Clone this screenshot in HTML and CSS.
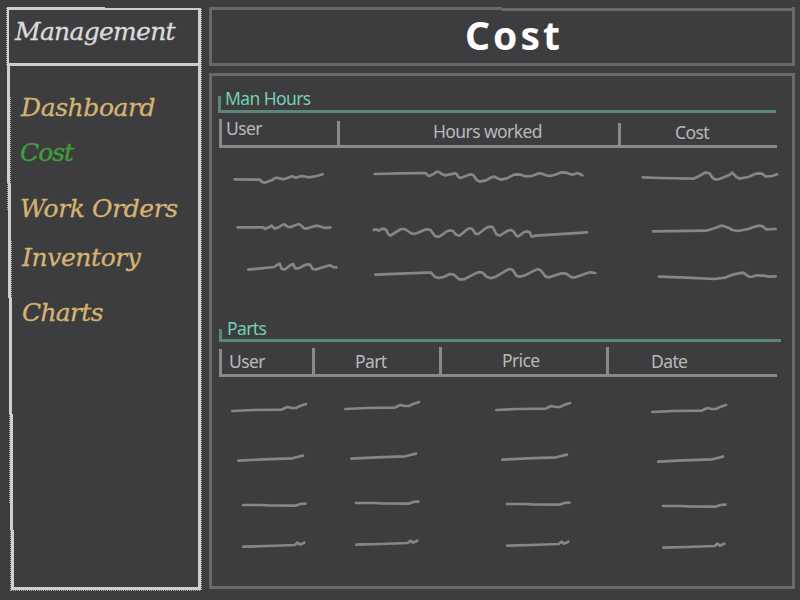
FILE: index.html
```
<!DOCTYPE html>
<html lang="en">
<head>
<meta charset="utf-8">
<title>Cost</title>
<link rel="stylesheet" href="styles.css">
</head>
<body>
<div class="app">
  <aside class="sidebar">
    <svg class="frame" width="209" height="600" viewBox="0 0 209 600" aria-hidden="true">
      <g class="fuzz">
        <path d="M201.5 9V590M10.5 97V183M7.5 183V211M11.5 241V298M9.5 414V503M10.5 530V591M6.5 8V65" stroke-dasharray="1 1"/>
        <path d="M105 9.5H200M11 590.5H201" stroke-dasharray="1 1"/>
      </g>
      <path class="edge" d="M6 7H105V8H201V590H11V530H10V414H9V298H8V183H7V66H7V7ZM9 10V63H198V10ZM10 66V183H11V298H12V414H13V530H14V587H198V66Z" fill-rule="evenodd"/>
    </svg>
    <h2 class="brand">Management</h2>
    <nav class="nav">
      <a class="nav-dashboard">Dashboard</a>
      <a class="nav-cost">Cost</a>
      <a class="nav-orders">Work Orders</a>
      <a class="nav-inventory">Inventory</a>
      <a class="nav-charts">Charts</a>
    </nav>
  </aside>
  <main class="main">
    <header class="titlebar"><h1>Cost</h1></header>
    <section class="panel">
      <h3 class="heading hours-heading"><span>Man Hours</span></h3>
      <div class="columns hours-cols hours-head">
        <span class="th first h-user"><b>User</b></span><span class="th h-worked"><b>Hours worked</b></span><span class="th h-cost"><b>Cost</b></span>
      </div>
      <div class="columns hours-cols">
        <svg class="r1" viewBox="219 148 118 52"><g transform="translate(210 150) scale(.33333)"><path d="M74 88L150 89 155 95 163 98 185 91 193 85 200 83 220 88 235 83 247 79 257 83 275 78 297 82 320 78 338 73"/></g></svg>
        <svg class="r1" viewBox="337 148 281 52"><g transform="translate(400 150) scale(.33333)"><path d="M-76 72L0 70 77 69 82 76 88 78 103 71 108 66 114 65 124 71 135 76 165 70 170 72 175 81 181 84 212 73 220 75 230 90 239 95 258 91 276 81 283 80 303 89 320 85 342 74 350 73 362 74 375 79 395 78 413 71 422 70 442 77 451 78 470 73 484 67 500 68 516 74 534 69 547 76"/></g></svg>
        <svg class="r1" viewBox="618 148 163 52"><g transform="translate(600 150) scale(.33333)"><path d="M128 82L180 84 280 86 298 78 315 68 328 69 338 84 348 89 358 87 375 80 388 75 397 68 407 79 418 86 445 81 465 72 475 70 486 71 498 80 516 78 531 73"/></g></svg>
      </div>
      <div class="columns hours-cols">
        <svg class="r2" viewBox="219 200 118 50"><g transform="translate(210 150) scale(.33333)"><path d="M83 232L160 232 165 237 178 231 185 227 194 236 208 231 216 225 223 223 233 230 240 232 258 225 267 222 273 226 282 235 294 235 312 229 322 227 336 231 345 234 361 232"/></g></svg>
        <svg class="r2" viewBox="337 200 281 50"><g transform="translate(400 150) scale(.33333)"><path d="M-79 240L-72 238 -63 242 -56 237 -48 236 -41 240 -36 252 -29 257 -2 240 5 237 14 237 32 249 42 252 52 249 75 239 83 238 92 241 104 257 111 260 118 260 142 243 151 241 159 243 168 254 179 257 202 238 210 235 217 237 227 252 235 252 258 234 268 230 278 231 289 252 299 257 324 242 333 240 340 244 350 258 355 259 373 246 381 244 389 247 395 260 408 257 561 247"/></g></svg>
        <svg class="r2" viewBox="618 200 163 50"><g transform="translate(600 150) scale(.33333)"><path d="M159 244L318 242 346 234 360 228 368 227 385 233 397 240 413 243 445 237 468 229 479 227 488 229 498 238 527 237"/></g></svg>
      </div>
      <div class="columns hours-cols">
        <svg class="r3" viewBox="219 250 118 50"><g transform="translate(210 150) scale(.33333)"><path d="M115 359L192 351 201 345 209 341 215 357 225 358 242 345 249 342 256 355 266 355 285 345 293 343 300 344 308 357 320 358 344 350 359 346 370 351 379 352"/></g></svg>
        <svg class="r3" viewBox="337 250 281 50"><g transform="translate(400 150) scale(.33333)"><path d="M-74 374L0 371 84 368 93 368 104 380 115 384 131 381 150 372 162 374 177 388 192 388 233 367 246 367 260 380 272 385 288 380 323 359 330 357 338 360 350 378 360 380 375 376 410 358 417 358 423 362 437 380 448 382 484 370 498 371 515 382 526 382 560 370 570 367 586 369"/></g></svg>
        <svg class="r3" viewBox="618 250 163 50"><g transform="translate(600 150) scale(.33333)"><path d="M177 380L240 382 343 387 375 383 397 374 430 368 437 373 447 380 453 381 470 376 490 377 508 380 527 379"/></g></svg>
      </div>
      <h3 class="heading parts-heading"><span>Parts</span></h3>
      <div class="columns parts-cols parts-head">
        <span class="th first p-user"><b>User</b></span><span class="th p-part"><b>Part</b></span><span class="th p-price"><b>Price</b></span><span class="th p-date"><b>Date</b></span>
      </div>
      <div class="columns parts-cols">
        <svg class="p1" viewBox="219 377 93 55"><g id="line1" transform="translate(210 310) scale(.33333)"><path d="M67 303L130 300 215 299 225 294 232 291 245 294 258 294 272 287 288 282"/></g></svg>
        <svg class="p1" viewBox="312 377 127 55"><use href="#line1" x="113" y="-2"/></svg>
        <svg class="p1" viewBox="439 377 167 55"><use href="#line1" x="264" y="-1"/></svg>
        <svg class="p1" viewBox="606 377 175 55"><use href="#line1" x="420" y="1"/></svg>
      </div>
      <div class="columns parts-cols">
        <svg class="p2" viewBox="219 432 93 49"><g id="line2" transform="translate(210 440) scale(.33333)"><path d="M85 62L160 58 247 55 262 51 279 47"/></g></svg>
        <svg class="p2" viewBox="312 432 127 49"><use href="#line2" x="113" y="-2"/></svg>
        <svg class="p2" viewBox="439 432 167 49"><use href="#line2" x="264" y="-1"/></svg>
        <svg class="p2" viewBox="606 432 175 49"><use href="#line2" x="420" y="1"/></svg>
      </div>
      <div class="columns parts-cols">
        <svg class="p3" viewBox="219 481 93 45"><g id="line3" transform="translate(210 440) scale(.33333)"><path d="M99 195L150 195 175 196 257 197 270 192 286 191"/></g></svg>
        <svg class="p3" viewBox="312 481 127 45"><use href="#line3" x="113" y="-2"/></svg>
        <svg class="p3" viewBox="439 481 167 45"><use href="#line3" x="264" y="-1"/></svg>
        <svg class="p3" viewBox="606 481 175 45"><use href="#line3" x="420" y="1"/></svg>
      </div>
      <div class="columns parts-cols">
        <svg class="p4" viewBox="219 526 93 44"><g id="line4" transform="translate(210 440) scale(.33333)"><path d="M100 320L170 318 254 315 263 308 269 314 283 308"/></g></svg>
        <svg class="p4" viewBox="312 526 127 44"><use href="#line4" x="113" y="-2"/></svg>
        <svg class="p4" viewBox="439 526 167 44"><use href="#line4" x="264" y="-1"/></svg>
        <svg class="p4" viewBox="606 526 175 44"><use href="#line4" x="420" y="1"/></svg>
      </div>
    </section>
  </main>
</div>
</body>
</html>
```
FILE: styles.css
```
* { box-sizing: border-box; margin: 0; padding: 0; }
body { background: #3d3d3f; font-family: "Noto Sans", sans-serif; }
.app { width: 800px; height: 600px; display: grid; grid-template-columns: 209px 586px; overflow: hidden; }

.sidebar { position: relative; padding-top: 17px; font-family: "DejaVu Serif", serif; font-style: italic; -webkit-text-stroke: .3px; }
.frame { position: absolute; left: 0; top: 0; }
.edge { fill: #cfcfcf; }
.fuzz path { fill: none; stroke: #a5a5a5; stroke-width: 1; }
.brand { padding-left: 15px; font-size: 25px; letter-spacing: -.7px; font-weight: 400; line-height: 30px; color: #dbdbdb; white-space: nowrap; }
.nav { display: flex; flex-direction: column; padding: 46px 0 0 21px; color: #d5b470; font-size: 25px; letter-spacing: -.4px; line-height: 30px; white-space: nowrap; }
.nav-cost { margin: 15px 0 0 -1px; color: #3fa037; letter-spacing: -1px; }
.nav-orders { margin: 26px 0 0 -1px; }
.nav-inventory { margin: 19px 0 0 1px; }
.nav-charts { margin: 25px 0 0 1px; letter-spacing: -.7px; }

.main { display: flex; flex-direction: column; gap: 7px; padding-top: 7px; }
.titlebar {
  height: 59px; border: 3px solid #696969; border-top: 0; text-align: center;
  background: linear-gradient(#696969, #696969) 0 0 / 290px 3px no-repeat, linear-gradient(#696969, #696969) 290px 1px / 290px 3px no-repeat;
}
.titlebar h1 { font: 700 39px/50px "Noto Sans", sans-serif; letter-spacing: 3px; color: #fff; padding: 3px 0 0 24px; }
.panel { height: 516px; border: 3px solid #696969; padding: 20px 0 0 7px; }
.heading { display: flex; color: #72d1b1; font-size: 17.5px; letter-spacing: -.6px; font-weight: 400; line-height: 20px; border: 3px solid #5c8677; border-width: 0 0 3px 3px; }
.hours-heading { width: 558px; height: 17px; margin-left: -1px; margin-bottom: 6px; }
.parts-heading { width: 562px; height: 13px; margin-top: 29px; margin-bottom: 5px; }
.heading span { display: block; margin-left: 4px; margin-top: -8px; }
.parts-heading span { margin-left: 5px; margin-top: -11px; }
.columns { display: grid; }
.hours-cols { grid-template-columns: 118px 281px 163px; }
.parts-cols { grid-template-columns: 93px 127px 167px 175px; }
.hours-head, .parts-head { border-bottom: 3px solid #8a8a8a; align-items: end; }
.hours-head { width: 558px; height: 29px; }
.parts-head { width: 558px; height: 30px; }
.th { border-left: 3px solid #8a8a8a; height: 24px; color: #b9b9b9; font-size: 17.5px; letter-spacing: -.6px; line-height: 20px; white-space: nowrap; }
.th b { display: block; font-weight: 400; margin-top: -1px; }
.h-user { height: 26px; padding-left: 4px; }
.h-worked { padding: 1px 0 0 93px; }
.h-cost { height: 22px; padding-left: 54px; }
.p-user { height: 26px; padding: 3px 0 0 7px; }
.p-part { height: 27px; padding: 4px 0 0 40px; }
.p-price, .p-date { height: 28px; }
.p-price { padding: 4px 0 0 60px; }
.p-date { padding: 5px 0 0 42px; }
svg { display: block; overflow: visible; }
.columns svg { width: 100%; }
.columns path { fill: none; stroke: #868686; stroke-width: 8; stroke-linejoin: round; stroke-linecap: round; }
.r1 { height: 52px; }
.r2, .r3 { height: 50px; }
.p1 { height: 55px; }
.p2 { height: 49px; }
.p3 { height: 45px; }
.p4 { height: 44px; }
```
